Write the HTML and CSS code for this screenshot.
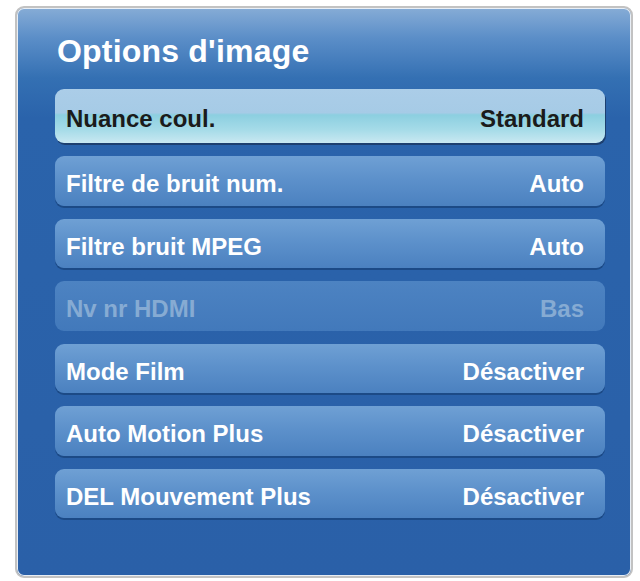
FILE: index.html
```html
<!DOCTYPE html>
<html lang="fr">
<head>
<meta charset="utf-8">
<title>Options d'image</title>
<link rel="stylesheet" href="styles.css">
</head>
<body>
<div class="panel">
  <h1 class="title">Options d'image</h1>
  <ul class="menu">
    <li class="row selected"><span class="label">Nuance coul.</span><span class="value">Standard</span></li>
    <li class="row"><span class="label">Filtre de bruit num.</span><span class="value">Auto</span></li>
    <li class="row"><span class="label">Filtre bruit MPEG</span><span class="value">Auto</span></li>
    <li class="row disabled"><span class="label">Nv nr HDMI</span><span class="value">Bas</span></li>
    <li class="row"><span class="label">Mode Film</span><span class="value">Désactiver</span></li>
    <li class="row"><span class="label">Auto Motion Plus</span><span class="value">Désactiver</span></li>
    <li class="row"><span class="label">DEL Mouvement Plus</span><span class="value">Désactiver</span></li>
  </ul>
</div>
</body>
</html>
```
FILE: styles.css
```css
html, body {
  margin: 0;
  padding: 0;
  background: #ffffff;
}
body {
  width: 640px;
  height: 581px;
  font-family: "Liberation Sans", Arial, sans-serif;
}
.panel {
  box-sizing: border-box;
  margin: 6px 0 0 15px;
  width: 618px;
  height: 572px;
  border: 2px solid #c2c2c2;
  border-radius: 9px;
  box-shadow: inset 0 0 0 1px #e8eef5;
  background: linear-gradient(#86acd6 0px, #5b8ec8 30px, #3470b3 70px, #2a63ab 110px, #2a60a8 100%);
  padding: 0 26px 0 38px;
}
.title {
  margin: 0;
  padding: 24px 0 0 2px;
  height: 57px;
  font-size: 32px;
  font-weight: bold;
  color: #ffffff;
  line-height: 38px;
  letter-spacing: 0.2px;
}
.menu {
  list-style: none;
  margin: 0;
  padding: 0;
  display: flex;
  flex-direction: column;
  gap: 13px;
}
.row {
  box-sizing: border-box;
  height: 49.5px;
  border-radius: 9px;
  display: flex;
  justify-content: space-between;
  align-items: center;
  padding: 7px 21px 0 11px;
  font-size: 24px;
  font-weight: bold;
  color: #ffffff;
  background: linear-gradient(#6fa0d4 0%, #5d91cb 45%, #4b81c0 100%);
  box-shadow: 0 2px 0 #1c4a86;
}
.row.selected {
  height: 54px;
  color: #1b1b1b;
  padding-top: 6px;
  background: linear-gradient(#abcde8 0%, #a6cbe6 44%, #8ccfe0 48%, #a5dbe8 75%, #c9e8f1 100%);
  box-shadow: 1px 2px 0 #1d3f6f;
}
.row.disabled {
  color: #86abd3;
  background: linear-gradient(#4d83c2 0%, #4279bb 100%);
  box-shadow: none;
}
```
